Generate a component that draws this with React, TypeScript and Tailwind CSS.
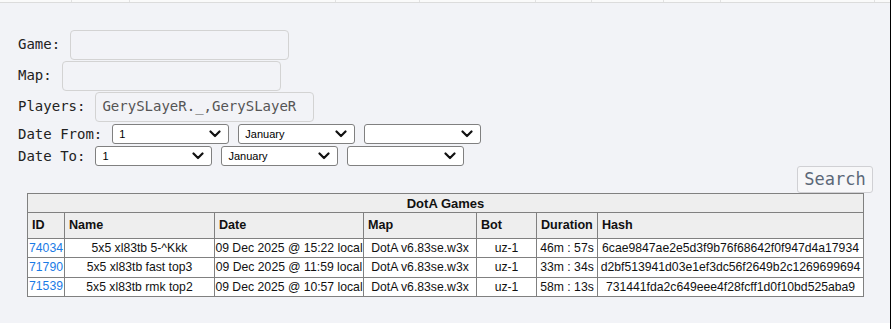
import React from "react";

const mono = { fontFamily: '"DejaVu Sans Mono", "Liberation Mono", monospace' };

const chevron =
  "url(\"data:image/svg+xml;utf8,<svg xmlns='http://www.w3.org/2000/svg' width='12' height='8' viewBox='0 0 12 8'><path d='M1.5 1.5 L6 6 L10.5 1.5' fill='none' stroke='%23111' stroke-width='2.2' stroke-linecap='round' stroke-linejoin='round'/></svg>\")";

function Sel({ value, options }: { value: string; options: string[] }) {
  return (
    <select
      defaultValue={value}
      className="appearance-none w-[117px] h-[20px] bg-white border border-[#808080] rounded-[3px] pl-[6px] text-[11px] text-black leading-none"
      style={{
        fontFamily: '"Liberation Sans", Arial, sans-serif',
        backgroundImage: chevron,
        backgroundRepeat: "no-repeat",
        backgroundPosition: "right 7px center",
      }}
    >
      {options.map((o) => (
        <option key={o} value={o}>
          {o}
        </option>
      ))}
    </select>
  );
}

const rows = [
  {
    id: "74034",
    name: "5x5 xl83tb 5-^Kkk",
    date: "09 Dec 2025 @ 15:22 local",
    map: "DotA v6.83se.w3x",
    bot: "uz-1",
    dur: "46m : 57s",
    hash: "6cae9847ae2e5d3f9b76f68642f0f947d4a17934",
  },
  {
    id: "71790",
    name: "5x5 xl83tb fast top3",
    date: "09 Dec 2025 @ 11:59 local",
    map: "DotA v6.83se.w3x",
    bot: "uz-1",
    dur: "33m : 34s",
    hash: "d2bf513941d03e1ef3dc56f2649b2c1269699694",
  },
  {
    id: "71539",
    name: "5x5 xl83tb rmk top2",
    date: "09 Dec 2025 @ 10:57 local",
    map: "DotA v6.83se.w3x",
    bot: "uz-1",
    dur: "58m : 13s",
    hash: "731441fda2c649eee4f28fcff1d0f10bd525aba9",
  },
];

const ticks = [72, 58, 206, 84, 116, 56, 72, 57, 154];

const inputCls =
  "w-[219px] h-[30px] border border-[#d3d3d3] rounded-[4px] bg-transparent px-[6px] text-[14px] leading-[20px] text-[#555] outline-none";

export default function App() {
  return (
    <div className="w-[892px] h-[329px] bg-white flex">
      <div className="w-[890px] flex flex-col">
        <div className="h-[2px] flex bg-[#fafafa]">
          {ticks.map((w, i) => (
            <div key={i} style={{ width: w }} className="h-full border-r border-[#e2e2e2]" />
          ))}
        </div>
        <div className="h-px bg-[#dcdcdc]" />
        <div className="h-[320px] bg-[#f2f3f7] flex flex-col pt-[26px] pl-[18px] pr-[17px]">
          <div className="flex flex-col text-[14px] text-[#222]" style={mono}>
            <div className="flex items-center gap-[10px] h-[31px]">
              <span>Game:</span>
              <input className={inputCls} style={mono} />
            </div>
            <div className="flex items-center gap-[10px] h-[31px]">
              <span>Map:</span>
              <input className={inputCls} style={mono} />
            </div>
            <div className="flex items-center gap-[10px] h-[31px]">
              <span>Players:</span>
              <div
                role="textbox"
                className="w-[219px] h-[30px] border border-[#d3d3d3] rounded-[4px] px-[6px] flex items-center text-[14px] text-[#555] whitespace-nowrap overflow-hidden"
                style={mono}
              >
                GerySLayeR._,GerySLayeR
              </div>
            </div>
            <div className="flex items-center h-[22px] mt-px">
              <span className="mr-[10px]">Date From:</span>
              <div className="flex gap-[9px]">
                <Sel value="1" options={["1", "2", "3"]} />
                <Sel value="January" options={["January", "February"]} />
                <Sel value="" options={[""]} />
              </div>
            </div>
            <div className="flex items-center h-[22px]">
              <span className="mr-[10px]">Date To:</span>
              <div className="flex gap-[9px]">
                <Sel value="1" options={["1", "2", "3"]} />
                <Sel value="January" options={["January", "February"]} />
                <Sel value="" options={[""]} />
              </div>
            </div>
          </div>
          <div className="flex justify-end -mt-px">
            <button
              className="w-[76px] h-[27px] border border-[#d0d0d4] rounded-[3px] bg-[#f7f7f9] text-[17px] text-[#5c6878] leading-none"
              style={mono}
            >
              Search
            </button>
          </div>
          <div className="pl-[9px]">
            <table
              className="border-collapse table-fixed text-[12.2px] text-[#111]"
              style={{ fontFamily: '"Liberation Sans", Arial, sans-serif', width: 836 }}
            >
              <colgroup>
                <col style={{ width: 37 }} />
                <col style={{ width: 150 }} />
                <col style={{ width: 149 }} />
                <col style={{ width: 113 }} />
                <col style={{ width: 60 }} />
                <col style={{ width: 61 }} />
                <col style={{ width: 266 }} />
              </colgroup>
              <thead>
                <tr className="h-[19px] bg-[#eeeeee]">
                  <th colSpan={7} className="border border-[#808080] font-bold text-center text-[13px] p-0 leading-[17px]">
                    DotA Games
                  </th>
                </tr>
                <tr className="h-[26px] bg-[#eeeeee]">
                  {["ID", "Name", "Date", "Map", "Bot", "Duration", "Hash"].map((h) => (
                    <th key={h} className="border border-[#808080] font-bold text-left text-[12.6px] px-[4px] py-0 whitespace-nowrap">
                      {h}
                    </th>
                  ))}
                </tr>
              </thead>
              <tbody>
                {rows.map((r) => (
                  <tr key={r.id} className="h-[19px] bg-white">
                    <td className="border border-[#808080] px-0 text-center leading-[17px] whitespace-nowrap">
                      <a href="#" className="text-[#1a7be6]">
                        {r.id}
                      </a>
                    </td>
                    <td className="border border-[#808080] px-0 text-center whitespace-nowrap">{r.name}</td>
                    <td className="border border-[#808080] px-0 text-center whitespace-nowrap">{r.date}</td>
                    <td className="border border-[#808080] px-0 text-center whitespace-nowrap">{r.map}</td>
                    <td className="border border-[#808080] px-0 text-center whitespace-nowrap">{r.bot}</td>
                    <td className="border border-[#808080] px-0 text-center whitespace-nowrap">{r.dur}</td>
                    <td className="border border-[#808080] px-0 text-center whitespace-nowrap">{r.hash}</td>
                  </tr>
                ))}
              </tbody>
            </table>
          </div>
        </div>
        <div className="flex-1 bg-white" />
      </div>
      <div className="w-px bg-black" />
      <div className="w-px bg-white" />
    </div>
  );
}
